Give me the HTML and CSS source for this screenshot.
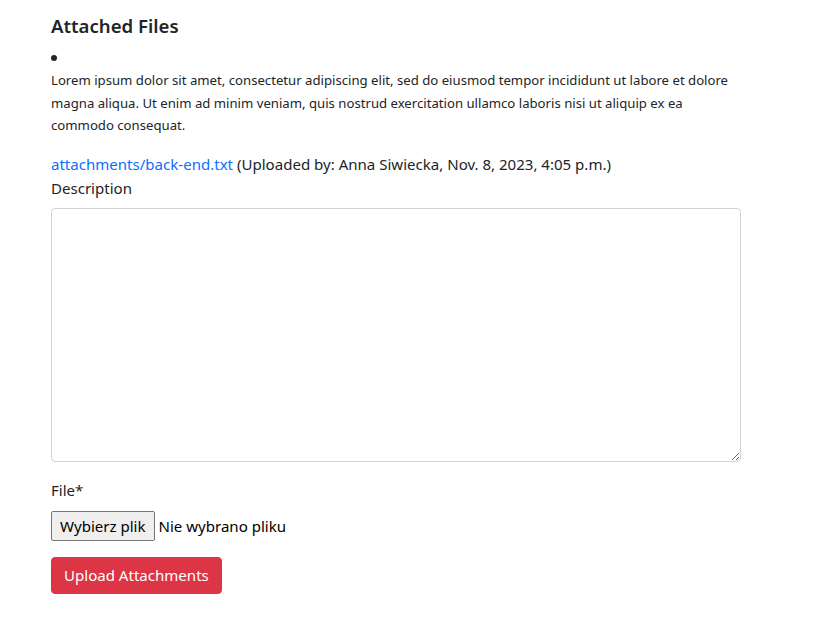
FILE: index.html
```html
<!DOCTYPE html>
<html lang="pl">
<head>
<meta charset="utf-8">
<title>Attached Files</title>
<link rel="stylesheet" href="styles.css">
</head>
<body>
<main class="page">
  <h5 class="title">Attached Files</h5>
  <ul class="files">
    <li class="file-item"></li>
  </ul>
  <p class="lead-text">Lorem ipsum dolor sit amet, consectetur adipiscing elit, sed do eiusmod tempor incididunt ut labore et dolore magna aliqua. Ut enim ad minim veniam, quis nostrud exercitation ullamco laboris nisi ut aliquip ex ea commodo consequat.</p>
  <div class="upload-line"><a href="#" class="file-link">attachments/back-end.txt</a> (Uploaded by: Anna Siwiecka, Nov. 8, 2023, 4:05 p.m.)</div>
  <form class="upload-form">
    <label class="label" for="desc">Description</label>
    <textarea id="desc" class="textarea"></textarea>
    <label class="label label-file" for="file">File*</label>
    <div class="file-row">
      <span class="file-btn">Wybierz plik</span>
      <span class="file-none">Nie wybrano pliku</span>
    </div>
    <button type="button" class="btn-danger">Upload Attachments</button>
  </form>
</main>
</body>
</html>
```
FILE: styles.css
```css
html, body {
  margin: 0;
  padding: 0;
  background: #fff;
}
body {
  font-family: "Noto Sans", "Open Sans", sans-serif;
  color: #212529;
  font-size: 15.05px;
  line-height: 24px;
}
.page {
  width: 690px;
  margin-left: 51px;
  padding-top: 12px;
}
.title {
  margin: 0;
  font-size: 18.6px;
  font-weight: 600;
  line-height: 28px;
  color: #212529;
}
.files {
  margin: 10px 0 0;
  padding: 0;
  list-style: disc inside;
}
.file-item {
  height: 14px;
  font-size: 16px;
  line-height: 14px;
}
.lead-text {
  margin: 5px 0 0;
  font-size: 13.17px;
  line-height: 22.5px;
}
.upload-line {
  margin-top: 15px;
  line-height: 24px;
}
.file-link {
  color: #0d6efd;
  text-decoration: none;
}
.upload-form {
  display: flex;
  flex-direction: column;
  align-items: flex-start;
}
.label {
  line-height: 24px;
  margin-bottom: 8px;
}
.textarea {
  box-sizing: border-box;
  width: 690px;
  height: 254px;
  border: 1px solid #ced4da;
  border-radius: 4px;
  margin: 0;
  padding: 6px 12px;
  font: inherit;
}
.label-file {
  margin-top: 16px;
  margin-bottom: 9px;
}
.file-row {
  display: flex;
  align-items: center;
  gap: 4px;
}
.file-btn {
  box-sizing: border-box;
  height: 30px;
  padding: 0 8px;
  border: 1px solid #767676;
  border-radius: 2px;
  background: #efefef;
  line-height: 28px;
  color: #000;
}
.file-none {
  color: #000;
}
.btn-danger {
  margin-top: 16px;
  box-sizing: border-box;
  height: 37px;
  padding: 0 12px;
  border: 1px solid #dc3545;
  border-radius: 4px;
  background: #dc3545;
  color: #fff;
  font: inherit;
  line-height: 24px;
}
```
